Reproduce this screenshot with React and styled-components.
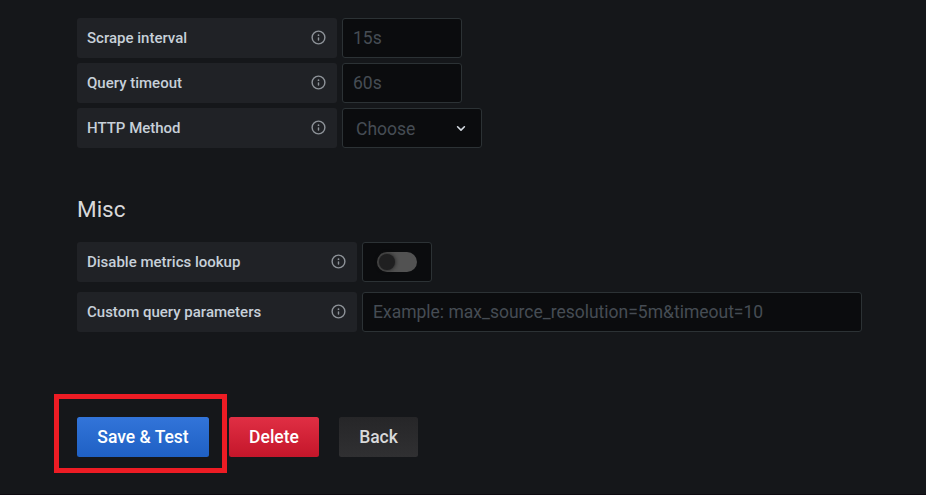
import React from 'react';
import styled, { createGlobalStyle, css } from 'styled-components';

const GlobalStyle = createGlobalStyle`
  *, *::before, *::after { box-sizing: border-box; }
  body {
    margin: 0;
    background: #15171a;
    color: #c7d0d9;
    font-family: Roboto, "Liberation Sans", sans-serif;
    overflow: hidden;
  }
`;

const Page = styled.main`
  height: 495px;
  padding: 18px 64px 0 77px;
  border-bottom: 1px solid #0d0a10;
`;

const Fields = styled.section`
  display: flex;
  flex-direction: column;
  gap: ${(p) => p.$gap}px;
`;

const Row = styled.div`
  display: flex;
  gap: 5px;
  height: 40px;
`;

const Label = styled.label`
  display: flex;
  align-items: center;
  justify-content: space-between;
  width: ${(p) => p.$width}px;
  padding: 0 10px;
  border-radius: 3px;
  background: #202226;
  font-size: 15px;
  font-weight: 500;
  line-height: 20px;
  white-space: nowrap;
`;

const InfoSvg = styled.svg`
  width: 17px;
  height: 17px;
  margin-bottom: 1px;
  color: #8e9399;
`;

const fieldBox = css`
  height: 40px;
  border: 1px solid #2c3235;
  border-radius: 3px;
  background: #0b0c0e;
`;

const Input = styled.input`
  ${fieldBox}
  width: ${(p) => p.$width}px;
  padding: 0 10px;
  color: #c7d0d9;
  font: 400 17.5px Roboto, "Liberation Sans", sans-serif;
  outline: none;
  &::placeholder { color: #464c54; opacity: 1; }
`;

const Select = styled.button`
  ${fieldBox}
  display: flex;
  align-items: center;
  justify-content: space-between;
  width: 140px;
  padding: 1px 15px 0 13px;
  color: #464c54;
  font: 400 17.5px Roboto, "Liberation Sans", sans-serif;
`;

const ChevronSvg = styled.svg`
  width: 10px;
  height: 7px;
  color: #d5dbe2;
`;

const SwitchBox = styled.div`
  ${fieldBox}
  display: flex;
  align-items: center;
  justify-content: center;
  width: 70px;
`;

const Track = styled.button`
  display: flex;
  align-items: center;
  width: 40px;
  height: 20px;
  padding: 0 2px;
  border: 0;
  border-radius: 10px;
  background: #525252;
`;

const Knob = styled.span`
  width: 16px;
  height: 16px;
  border-radius: 50%;
  background: #1f1f20;
  box-shadow: 0 0 4px #151515;
`;

const Heading = styled.h3`
  margin: 46px 0 18px;
  color: #d8d9da;
  font-size: 22.5px;
  font-weight: 400;
  line-height: 30px;
`;

const Actions = styled.div`
  display: flex;
  gap: 20px;
  margin-top: 85px;
`;

const tones = {
  primary: css`width: 132px; color: #fff; background: linear-gradient(#3274d9, #1f60c4);`,
  danger: css`width: 90px; color: #fff; background: linear-gradient(#e02f44, #c4162a);`,
  plain: css`width: 79px; color: #d8d9da; background: linear-gradient(#262628, #303032);`,
};

const Button = styled.button`
  height: 40px;
  padding: 0;
  border: 0;
  border-radius: 2.5px;
  font: 500 17.5px Roboto, "Liberation Sans", sans-serif;
  white-space: nowrap;
  ${(p) => tones[p.$tone]}
`;

const Highlighted = styled.div`
  position: relative;
  display: flex;
  &::after {
    content: "";
    position: absolute;
    inset: -23px -18px -16px -23px;
    border: 5px solid #ed1c24;
    pointer-events: none;
  }
`;

function InfoIcon() {
  return (
    <InfoSvg viewBox="0 0 24 24" fill="currentColor" aria-hidden="true">
      <path d="M12,2A10,10,0,1,0,22,12,10.01114,10.01114,0,0,0,12,2Zm0,18a8,8,0,1,1,8-8A8.00917,8.00917,0,0,1,12,20Zm0-8.5a1,1,0,0,0-1,1v3a1,1,0,0,0,2,0v-3A1,1,0,0,0,12,11.5Zm0-4a1.25,1.25,0,1,0,1.25,1.25A1.25,1.25,0,0,0,12,7.5Z" />
    </InfoSvg>
  );
}

function Field({ label, width, children }) {
  return (
    <Row>
      <Label $width={width}>{label}<InfoIcon /></Label>
      {children}
    </Row>
  );
}

export default function App() {
  return (
    <>
      <GlobalStyle />
      <Page>
        <Fields $gap={5}>
          <Field label="Scrape interval" width={260}>
            <Input $width={120} placeholder="15s" />
          </Field>
          <Field label="Query timeout" width={260}>
            <Input $width={120} placeholder="60s" />
          </Field>
          <Field label="HTTP Method" width={260}>
            <Select type="button">
              Choose
              <ChevronSvg viewBox="0 0 10 7" fill="none" stroke="currentColor" strokeWidth="1.6" strokeLinecap="round" strokeLinejoin="round">
                <path d="M1.6 1.8 5 5.1 8.4 1.8" />
              </ChevronSvg>
            </Select>
          </Field>
        </Fields>
        <Heading>Misc</Heading>
        <Fields $gap={10}>
          <Field label="Disable metrics lookup" width={280}>
            <SwitchBox>
              <Track type="button" role="switch" aria-checked="false" aria-label="Disable metrics lookup"><Knob /></Track>
            </SwitchBox>
          </Field>
          <Field label="Custom query parameters" width={280}>
            <Input $width={500} placeholder="Example: max_source_resolution=5m&timeout=10" />
          </Field>
        </Fields>
        <Actions>
          <Highlighted><Button $tone="primary">Save &amp; Test</Button></Highlighted>
          <Button $tone="danger">Delete</Button>
          <Button $tone="plain">Back</Button>
        </Actions>
      </Page>
    </>
  );
}
